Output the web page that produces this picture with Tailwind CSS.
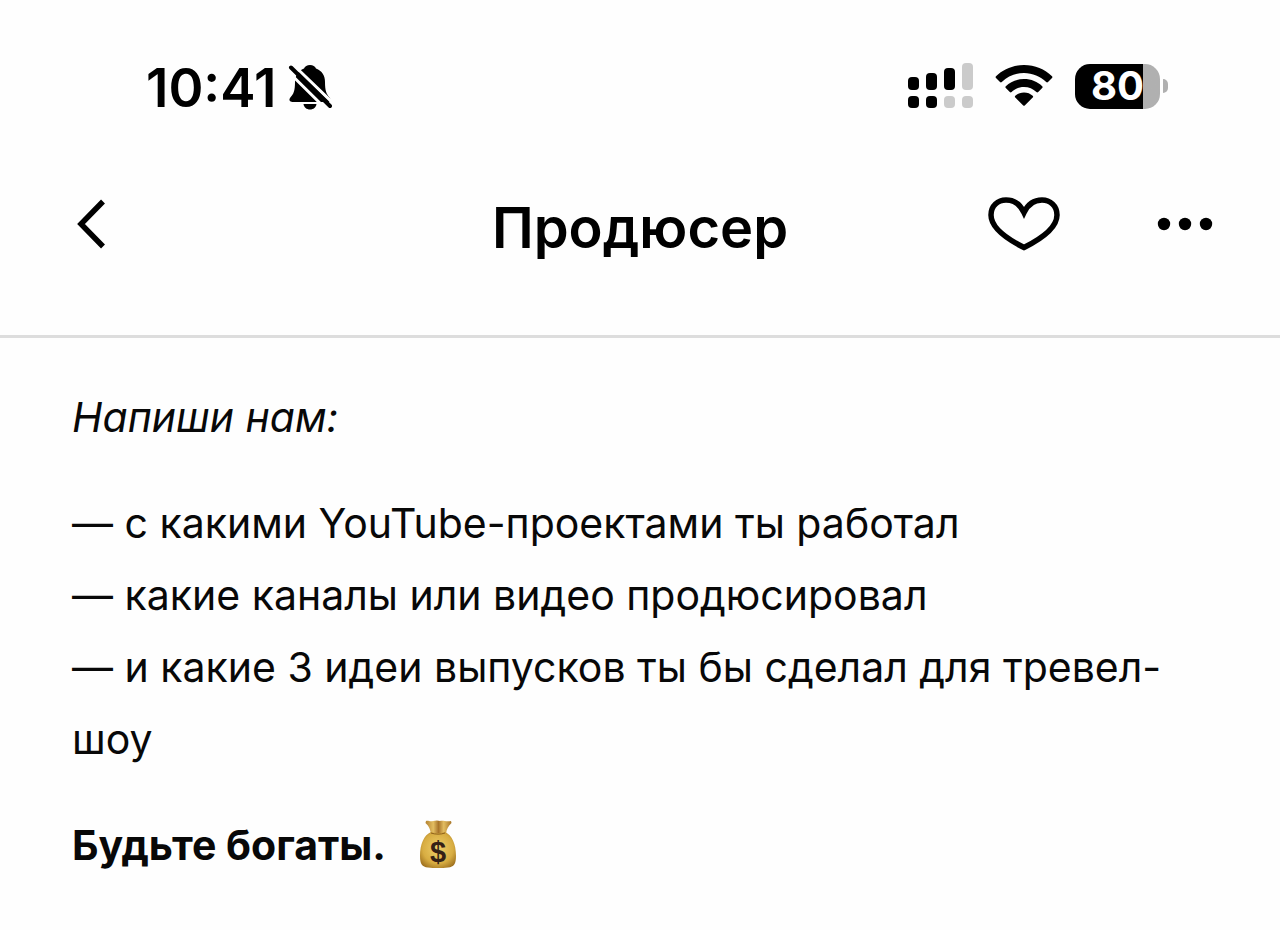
<!DOCTYPE html>
<html lang="ru">
<head>
<meta charset="utf-8">
<meta name="viewport" content="width=device-width, initial-scale=1">
<title>Продюсер</title>
<script src="https://cdn.jsdelivr.net/npm/@tailwindcss/browser@4"></script>
</head>
<body class="min-h-screen bg-[#fefefe] font-['Inter','Noto_Sans',sans-serif] text-black [font-optical-sizing:none]">
<header class="border-b-3 border-[#dddddd]">
  <div class="flex items-center justify-between pt-14 pr-28 pl-[146px]">
    <div class="flex items-center gap-3">
      <time class="text-[53px] leading-16 font-semibold">10:41</time>
      <svg class="mb-1 h-12 w-11" viewBox="0 0 44 48" role="img" aria-label="Без звука">
        <path d="M22 3c3 0 5 1.500 6 3.500 6 2.200 9 7.200 9 13.500 0 9 1.500 12 4.500 15.500 2 2.500 1 4.500-2 4.500H4.500c-3 0-4-2.200-2-4.700C5.500 32 7 29 7 20c0-6 3-11.300 9-13.500C17 4.500 19 3 22 3z"/>
        <path d="M15.500 42h13c-.5 3.400-3 5.500-6.500 5.500s-6-2.100-6.500-5.500z"/>
        <path d="M-1 8.500 39 48M5 2.500 46 42" stroke="#fefefe" stroke-width="3"/>
        <path d="M3 5.500 42 44" stroke="#000" stroke-width="4" stroke-linecap="round"/>
      </svg>
    </div>
    <div class="flex items-center pb-1">
      <svg class="mr-[22px] h-12 w-[66px]" viewBox="0 0 66 48" role="img" aria-label="Сигнал сети">
        <g fill="#000">
          <rect x="1" y="15" width="11" height="13" rx="4"/><rect x="19" y="11" width="11" height="17" rx="4"/><rect x="37" y="6" width="11" height="22" rx="4"/>
          <rect x="1" y="34" width="11" height="12" rx="4"/><rect x="19" y="34" width="11" height="12" rx="4"/>
        </g>
        <g fill="#cbcbcb"><rect x="55" y="1" width="11" height="27" rx="4"/><rect x="37" y="34" width="11" height="12" rx="4"/><rect x="55" y="34" width="11" height="12" rx="4"/></g>
      </svg>
      <svg class="mr-[22px] h-12 w-[58px]" viewBox="0 0 58 48" role="img" aria-label="Wi-Fi">
        <path d="M29 3C18 3 8.200 7.200 1 14.200c-.6.6-.6 1.200 0 1.800l4 4c.6.600 1.200.600 1.800 0C12.600 14.500 20.400 11 29 11s16.400 3.500 22.200 9c.6.600 1.200.600 1.800 0l4-4c.6-.6.6-1.200 0-1.800C49.800 7.200 40 3 29 3z"/>
        <path d="M29 17c-7.200 0-13.600 2.700-18.200 7.200-.6.600-.6 1.200 0 1.800l4 4c.6.600 1.200.600 1.800 0C19.800 26.900 24.200 25 29 25s9.200 1.900 12.400 5c.6.600 1.200.600 1.800 0l4-4c.6-.6.6-1.200 0-1.800C42.600 19.700 36.200 17 29 17z"/>
        <path d="M29 30.500c-3.400 0-6.400 1.200-8.700 3.300-.6.600-.6 1.200 0 1.800l7.700 7.700c.7.700 1.300.7 2 0l7.700-7.700c.6-.6.6-1.200 0-1.800-2.300-2.100-5.300-3.300-8.700-3.300z"/>
      </svg>
      <div class="flex items-center gap-[3px]" role="img" aria-label="Заряд 80%">
        <div class="flex h-[45px] w-[85px] items-center justify-center rounded-[15px] bg-linear-to-r from-black from-80% to-[#b0b0b0] to-80% text-[40px] leading-12 font-bold text-white">80</div>
        <div class="h-3.5 w-[5px] rounded-r-full bg-[#b0b0b0]"></div>
      </div>
    </div>
  </div>
  <nav class="grid grid-cols-[1fr_auto_1fr] items-center px-16 pt-18 pb-[71px]">
    <button type="button" aria-label="Назад" class="-mt-3 justify-self-start">
      <svg class="h-[60px] w-12" viewBox="0 0 48 60" fill="none" stroke="#000" stroke-width="5.500"><path d="M39 9.500 17 32l22 22.500"/></svg>
    </button>
    <h1 class="text-[56px] leading-[72px] font-semibold">Продюсер</h1>
    <div class="-mt-3 flex items-center gap-[93px] justify-self-end">
      <button type="button" aria-label="В избранное">
        <svg class="h-[60px] w-[76px]" viewBox="1 0 76 60" fill="none" stroke="#000" stroke-width="5.500"><path d="M38 55.500C26 49.500 5 38 5 23 5 13.500 12 8 20 8c8.500 0 14.500 5 18 12.500C41.500 13 47.500 8 56 8c8 0 15 5.500 15 15C71 38 50 49.500 38 55.500z"/></svg>
      </button>
      <button type="button" aria-label="Ещё">
        <svg class="h-[60px] w-[60px]" viewBox="1 0 60 60"><circle cx="9" cy="32" r="6.200"/><circle cx="30" cy="32" r="6.200"/><circle cx="51" cy="32" r="6.200"/></svg>
      </button>
    </div>
  </nav>
</header>
<main class="flex flex-col gap-[34px] px-[72px] pt-[43px] pb-12 text-[41px] leading-[72px] text-[#080808]">
  <p class="italic">Напиши нам:</p>
  <p>— с какими YouTube-проектами ты работал<br>— какие каналы или видео продюсировал<br>— и какие 3 идеи выпусков ты бы сделал для тревел-шоу</p>
  <p class="flex items-center gap-8 font-bold">Будьте богаты.
    <svg class="h-[50px] w-10" viewBox="0 0 40 50" role="img" aria-label="Мешок денег">
      <defs>
        <radialGradient id="bag" cx=".5" cy=".45" r=".65"><stop offset="0" stop-color="#efcf6a"/><stop offset=".65" stop-color="#d8ad42"/><stop offset="1" stop-color="#9a6c1c"/></radialGradient>
        <linearGradient id="neck"><stop offset="0" stop-color="#b38231"/><stop offset=".3" stop-color="#e3bd61"/><stop offset=".5" stop-color="#a8742a"/><stop offset=".7" stop-color="#e3bd61"/><stop offset="1" stop-color="#a87528"/></linearGradient>
      </defs>
      <path fill="url(#neck)" d="M8 1c2-1 4 1 7 0 3-.8 5-.8 7 0 3-1 6 1 11 0l.500 2c-3 3-5 6-5.500 11H13C12 9 11 6 7.500 3z"/>
      <path fill="url(#bag)" d="M13 12c4 1.500 10 1.500 14 0 7 3 11 12 11 24 0 8-2 11-8 11.500-6 .7-14 .7-20 0C4 47 2 44 2 36c0-12 4-21 11-24z"/>
      <path d="M13 13c4 1.500 10 1.500 14 0" fill="none" stroke="#8d5f1b"/>
      <text x="20" y="42" text-anchor="middle" font-family="Liberation Sans, sans-serif" font-size="29" font-weight="700" fill="#352016">$</text>
    </svg>
  </p>
</main>
</body>
</html>
